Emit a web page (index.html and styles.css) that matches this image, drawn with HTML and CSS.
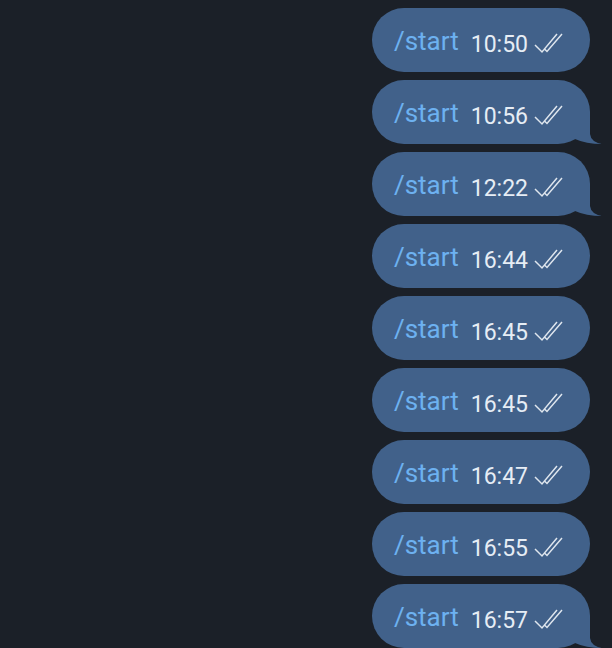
FILE: index.html
```html
<!DOCTYPE html>
<html lang="en">
<head>
  <meta charset="UTF-8" />
  <title>Chat</title>
  <link rel="stylesheet" href="styles.css">
</head>
<body>
  <div id="chat">
    <div class="msg"><span class="cmd">/start</span><span class="time">10:50</span><svg class="ticks" viewBox="0 0 32 22"><path d="M4 13 L11 20 L26 2 M13 16.5 L16 19.5 L31 2"/></svg></div>
    <div class="msg tail"><span class="cmd">/start</span><span class="time">10:56</span><svg class="ticks" viewBox="0 0 32 22"><path d="M4 13 L11 20 L26 2 M13 16.5 L16 19.5 L31 2"/></svg><svg class="tail-shape" viewBox="0 0 32 32"><path d="M18 0 L18 22 Q19 30 30 32 Q14 32 3 27 L3 0 Z"/></svg></div>
    <div class="msg tail"><span class="cmd">/start</span><span class="time">12:22</span><svg class="ticks" viewBox="0 0 32 22"><path d="M4 13 L11 20 L26 2 M13 16.5 L16 19.5 L31 2"/></svg><svg class="tail-shape" viewBox="0 0 32 32"><path d="M18 0 L18 22 Q19 30 30 32 Q14 32 3 27 L3 0 Z"/></svg></div>
    <div class="msg"><span class="cmd">/start</span><span class="time">16:44</span><svg class="ticks" viewBox="0 0 32 22"><path d="M4 13 L11 20 L26 2 M13 16.5 L16 19.5 L31 2"/></svg></div>
    <div class="msg"><span class="cmd">/start</span><span class="time">16:45</span><svg class="ticks" viewBox="0 0 32 22"><path d="M4 13 L11 20 L26 2 M13 16.5 L16 19.5 L31 2"/></svg></div>
    <div class="msg"><span class="cmd">/start</span><span class="time">16:45</span><svg class="ticks" viewBox="0 0 32 22"><path d="M4 13 L11 20 L26 2 M13 16.5 L16 19.5 L31 2"/></svg></div>
    <div class="msg"><span class="cmd">/start</span><span class="time">16:47</span><svg class="ticks" viewBox="0 0 32 22"><path d="M4 13 L11 20 L26 2 M13 16.5 L16 19.5 L31 2"/></svg></div>
    <div class="msg"><span class="cmd">/start</span><span class="time">16:55</span><svg class="ticks" viewBox="0 0 32 22"><path d="M4 13 L11 20 L26 2 M13 16.5 L16 19.5 L31 2"/></svg></div>
    <div class="msg tail"><span class="cmd">/start</span><span class="time">16:57</span><svg class="ticks" viewBox="0 0 32 22"><path d="M4 13 L11 20 L26 2 M13 16.5 L16 19.5 L31 2"/></svg><svg class="tail-shape" viewBox="0 0 32 32"><path d="M18 0 L18 22 Q19 30 30 32 Q14 32 3 27 L3 0 Z"/></svg></div>
  </div>
</body>
</html>
```

FILE: styles.css
```css
* {
  margin: 0;
  padding: 0;
  box-sizing: border-box;
}
html, body {
  width: 100%;
  height: 100%;
  overflow: hidden;
  background: #1b2028;
  font-family: Roboto, "Noto Sans", sans-serif;
}

#chat {
  display: flex;
  flex-direction: column;
  align-items: flex-end;
  gap: 8px;
  padding: 8px 22px 0 0;
}

.msg {
  position: relative;
  display: flex;
  align-items: center;
  height: 64px;
  padding: 0 27px 0 22px;
  background: #41618a;
  border-radius: 32px;
}

.cmd {
  color: #6db1f0;
  font-size: 26px;
  margin-top: 2px;
  margin-right: 12px;
}

.time {
  color: #e6edf5;
  font-size: 23px;
  margin-top: 8px;
  margin-right: 3px;
}

.ticks {
  width: 32px;
  height: 22px;
  margin-top: 6px;
  fill: none;
  stroke: #dfe6ee;
  stroke-width: 1.5;
}

.tail-shape {
  position: absolute;
  right: -14px;
  bottom: 0;
  width: 32px;
  height: 32px;
  fill: #41618a;
}
```
